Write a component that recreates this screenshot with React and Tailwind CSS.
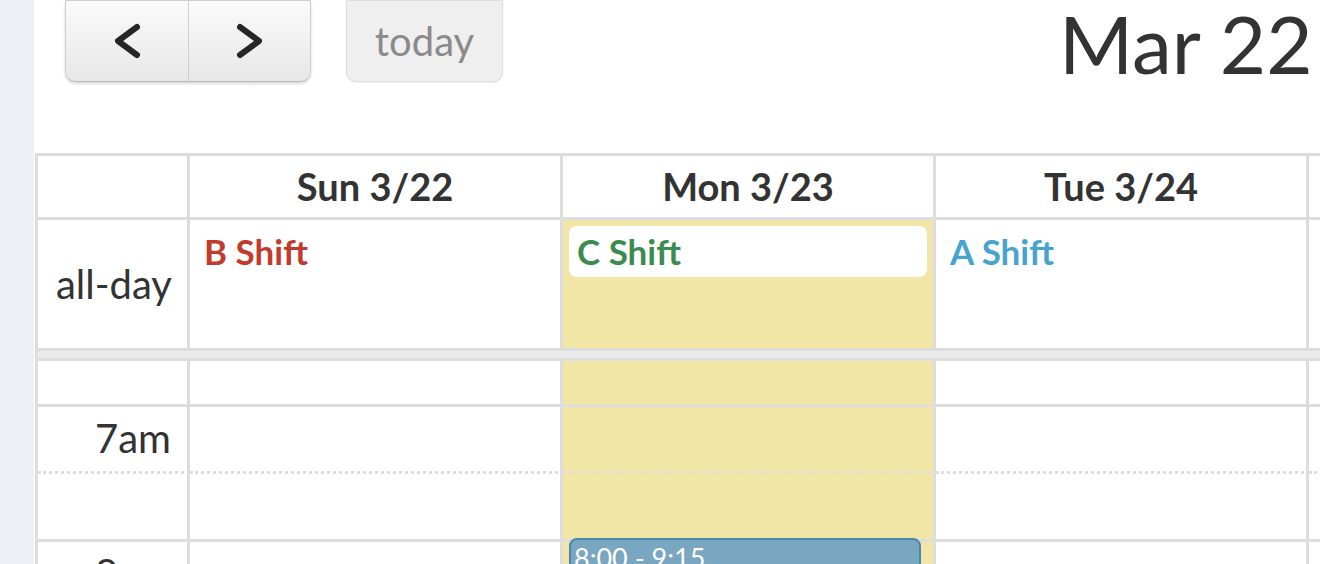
import React from "react";

const days = [
  { label: "Sun 3/22", today: false, shift: "B Shift", color: "text-[#c23b2c]" },
  { label: "Mon 3/23", today: true, shift: "C Shift", color: "text-[#3c8c52]" },
  { label: "Tue 3/24", today: false, shift: "A Shift", color: "text-[#48a4cf]" },
  { label: "Wed 3/25", today: false, shift: "", color: "" },
];

// time slots visible in the crop
const slots = [
  { id: 1, label: "", h: "h-[46px]", dotted: false },
  { id: 2, label: "7am", h: "h-[67px]", dotted: true },
  { id: 3, label: "", h: "h-[68px]", dotted: false },
  { id: 4, label: "8am", h: "h-[67px]", dotted: true },
];

const Chevron = ({ dir }) => (
  <svg width="30" height="36" viewBox="0 0 30 36" fill="none">
    <polyline
      points={dir === "left" ? "25,4 6,18 25,32" : "5,4 24,18 5,32"}
      stroke="#262626"
      strokeWidth="6"
      strokeLinecap="round"
      strokeLinejoin="round"
    />
  </svg>
);

const App = () => {
  return (
    <div className="flex h-[564px] w-[1320px] overflow-hidden bg-white font-['Lato','Liberation_Sans',sans-serif] text-[#333333]">
      <div className="w-[34px] shrink-0 bg-[#edf1f6]" />
      <div className="min-w-0 flex-1 overflow-hidden">
        {/* toolbar */}
        <div className="flex h-[153px] items-start pl-[31px]">
          <div className="flex h-[82px] shrink-0 rounded-b-[10px] shadow-[0_2px_3px_rgba(0,0,0,0.15)]">
            <button className="flex w-[123px] items-center justify-center rounded-bl-[10px] border-[1.5px] border-r-0 border-[#cfcfcf] border-b-[#b8b8b8] bg-gradient-to-b from-[#fbfbfb] to-[#e7e7e7]">
              <Chevron dir="left" />
            </button>
            <button className="flex w-[123px] items-center justify-center rounded-br-[10px] border-[1.5px] border-[#cfcfcf] border-b-[#b8b8b8] bg-gradient-to-b from-[#fbfbfb] to-[#e7e7e7]">
              <Chevron dir="right" />
            </button>
          </div>
          <button className="ml-[35px] flex h-[82px] w-[157px] shrink-0 items-center justify-center rounded-b-[10px] border-[1.5px] border-[#dedede] bg-[#efefef] text-[40px] text-[#8a8a8a] shadow-[0_1px_2px_rgba(0,0,0,0.08)]">
            today
          </button>
          <h2 className="ml-[556px] mt-[3px] shrink-0 whitespace-nowrap text-[80px] leading-none font-normal text-[#333333]">
            Mar 22 &nbsp;– 28, 2015
          </h2>
        </div>

        {/* calendar grid */}
        <div className="ml-[1px] grid w-[1500px] grid-cols-[152px_373px_373px_373px_373px] border-l-[3px] border-t-[3px] border-[#dddddd]">
          {/* header */}
          <div className="h-[64px] border-b-[3px] border-r-[3px] border-[#dddddd]" />
          {days.map((d) => (
            <div
              key={d.label}
              className="flex h-[64px] items-center justify-center border-b-[3px] border-r-[3px] border-[#dddddd] text-[38px] font-bold"
            >
              {d.label}
            </div>
          ))}

          {/* all-day */}
          <div className="flex h-[128px] items-center justify-end border-r-[3px] border-[#dddddd] pr-[15px] text-[40px]">
            all-day
          </div>
          {days.map((d) => (
            <div
              key={d.label}
              className={`h-[128px] border-r-[3px] border-[#dddddd] px-[6px] pt-[6px] ${d.today ? "bg-[#f2e6a6]" : ""}`}
            >
              {d.shift && (
                <div
                  className={`flex h-[51px] items-center rounded-[8px] px-[8px] text-[35px] font-bold ${d.color} ${d.today ? "bg-white" : ""}`}
                >
                  {d.shift}
                </div>
              )}
            </div>
          ))}

          {/* divider */}
          <div className="col-span-5 h-[13px] border-y-[3px] border-[#dddddd] bg-[#ebebeb]" />

          {/* slots */}
          {slots.map((s) => (
            <React.Fragment key={s.id}>
              <div
                className={`${s.h} flex justify-end border-b-[3px] border-r-[3px] border-[#dddddd] pr-[16px] pt-[9px] text-[40px] leading-[44px] ${s.dotted ? "[border-bottom-style:dotted]" : ""}`}
              >
                {s.label}
              </div>
              {days.map((d) => (
                <div
                  key={d.label}
                  className={`${s.h} relative border-b-[3px] border-r-[3px] border-[#dddddd] ${s.dotted ? "[border-bottom-style:dotted]" : ""} ${d.today ? "bg-[#f2e6a6]" : ""}`}
                >
                  {d.today && s.id === 4 && (
                    <div className="absolute left-[6px] right-[12px] top-[-4px] h-[100px] rounded-[8px] border-2 border-[#4b87ae] bg-[#79a6c1] px-[3px] pt-[3px] text-[27px] leading-[30px] text-white">
                      8:00 - 9:15
                    </div>
                  )}
                </div>
              ))}
            </React.Fragment>
          ))}
        </div>
      </div>
    </div>
  );
};

export default App;
